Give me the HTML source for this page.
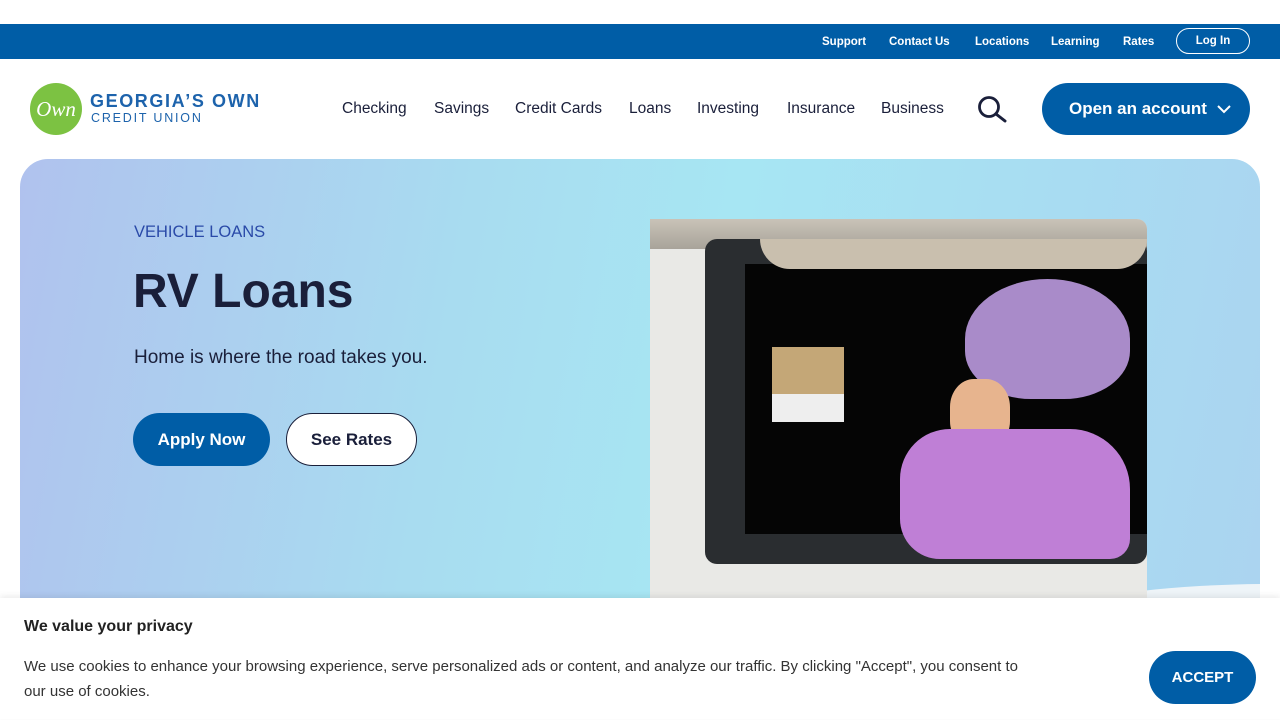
<!DOCTYPE html>
<html style="width:1280px;height:720px;overflow:hidden"><head><style>
*{margin:0;padding:0;box-sizing:border-box}
body{width:1280px;height:720px;overflow:hidden;background:#fff;font-family:"Liberation Sans",sans-serif;position:relative}
.top{position:absolute;top:24px;left:0;width:1280px;height:35px;background:#005da6}
.top a{position:absolute;top:12px;color:#fff;font-size:11.5px;font-weight:bold}
.login{position:absolute;left:1176px;top:4px;width:74px;height:26px;border:1px solid #fff;border-radius:13px;color:#fff;font-size:11.5px;font-weight:bold;text-align:center;line-height:24px}
.nav a{position:absolute;top:100px;font-size:15.5px;color:#1a1f3a}
.hero{position:absolute;left:20px;top:159px;width:1240px;height:440px;border-radius:28px 28px 0 0;background:linear-gradient(100deg,#b0c2ee 0%,#a8dcf0 35%,#a7e6f3 55%,#a8dcf2 80%,#abd4f0 100%);overflow:hidden}
.cookie{position:absolute;left:0;top:598px;width:1280px;height:121px;background:#fff;box-shadow:0 -2px 6px rgba(0,0,0,.08)}
</style></head><body>
<div class="top">
<a style="left:822px">Support</a><a style="left:889px">Contact Us</a><a style="left:975px">Locations</a><a style="left:1051px">Learning</a><a style="left:1123px">Rates</a>
<div class="login">Log In</div>
</div>
<div style="position:absolute;left:30px;top:83px;width:52px;height:52px;border-radius:50%;background:#7cc242;color:#fff;font-family:'Liberation Serif',serif;font-style:italic;font-size:21px;text-align:center;line-height:52px">Own</div>
<div style="position:absolute;left:90px;top:91px;color:#1d63ac;font-size:18px;font-weight:bold;letter-spacing:1.6px">GEORGIA’S OWN</div>
<div style="position:absolute;left:91px;top:111px;color:#1d63ac;font-size:12.5px;letter-spacing:1.8px">CREDIT UNION</div>
<div class="nav">
<a style="left:342px">Checking</a><a style="left:434px">Savings</a><a style="left:515px">Credit Cards</a><a style="left:629px">Loans</a><a style="left:697px">Investing</a><a style="left:787px">Insurance</a><a style="left:881px">Business</a>
</div>
<svg style="position:absolute;left:977px;top:95px" width="30" height="28" viewBox="0 0 30 28"><circle cx="12" cy="12" r="9.5" fill="none" stroke="#1a1f3a" stroke-width="2.8"/><line x1="19" y1="19" x2="28" y2="26" stroke="#1a1f3a" stroke-width="3" stroke-linecap="round"/></svg>
<div style="position:absolute;left:1042px;top:83px;width:208px;height:52px;border-radius:26px;background:#005da6;color:#fff;font-size:17px;font-weight:bold;line-height:52px;padding-left:27px">Open an account <svg width="14" height="10" viewBox="0 0 14 10" style="margin-left:5px"><path d="M1 2l6 6 6-6" fill="none" stroke="#fff" stroke-width="2"/></svg></div>
<div class="hero"><div style="position:absolute;left:900px;top:425px;width:700px;height:200px;border-radius:50%;background:#eef4f8"></div></div>
<div style="position:absolute;left:134px;top:223px;color:#2a4aa8;font-size:16.5px">VEHICLE LOANS</div>
<div style="position:absolute;left:133px;top:264px;color:#1a1f3a;font-size:48px;font-weight:bold">RV Loans</div>
<div style="position:absolute;left:134px;top:347px;color:#1a1f3a;font-size:19px">Home is where the road takes you.</div>
<div style="position:absolute;left:133px;top:413px;width:137px;height:53px;border-radius:27px;background:#005da6;color:#fff;font-size:17px;font-weight:bold;text-align:center;line-height:53px">Apply Now</div>
<div style="position:absolute;left:286px;top:413px;width:131px;height:53px;border-radius:27px;background:#fff;border:1px solid #1a1f3a;color:#1a1f3a;font-size:17px;font-weight:bold;text-align:center;line-height:51px">See Rates</div>
<div style="position:absolute;left:650px;top:219px;width:497px;height:379px;border-radius:0 10px 0 0;overflow:hidden;background:#e9e9e6">
<div style="position:absolute;left:0;top:0;width:497px;height:30px;background:linear-gradient(#c9c3b8,#a8a39a)"></div>
<div style="position:absolute;left:55px;top:20px;width:442px;height:325px;background:#2a2d30;border-radius:12px"></div>
<div style="position:absolute;left:95px;top:45px;width:402px;height:270px;background:#050505"></div>
<div style="position:absolute;left:110px;top:20px;width:387px;height:30px;background:#c9bfae;border-radius:0 0 40px 40px"></div>
<div style="position:absolute;left:122px;top:128px;width:72px;height:75px;background:#c4a777"></div>
<div style="position:absolute;left:122px;top:175px;width:72px;height:28px;background:#eee"></div>
<div style="position:absolute;left:315px;top:60px;width:165px;height:120px;border-radius:50% 50% 40% 40%;background:#a98bc9"></div>
<div style="position:absolute;left:300px;top:160px;width:60px;height:70px;border-radius:40%;background:#e7b48e"></div>
<div style="position:absolute;left:250px;top:210px;width:230px;height:130px;border-radius:50px 60px 20px 40px;background:#bf7fd6"></div>
</div>
<div class="cookie">
<div style="position:absolute;left:24px;top:20px;color:#222;font-size:16px;font-weight:bold">We value your privacy</div>
<div style="position:absolute;left:24px;top:56px;width:1015px;color:#333;font-size:15px;line-height:25px">We use cookies to enhance your browsing experience, serve personalized ads or content, and analyze our traffic. By clicking "Accept", you consent to our use of cookies.</div>
<div style="position:absolute;left:1149px;top:53px;width:107px;height:53px;border-radius:27px;background:#005da6;color:#fff;font-size:15px;font-weight:bold;text-align:center;line-height:53px">ACCEPT</div>
</div>
</body></html>
